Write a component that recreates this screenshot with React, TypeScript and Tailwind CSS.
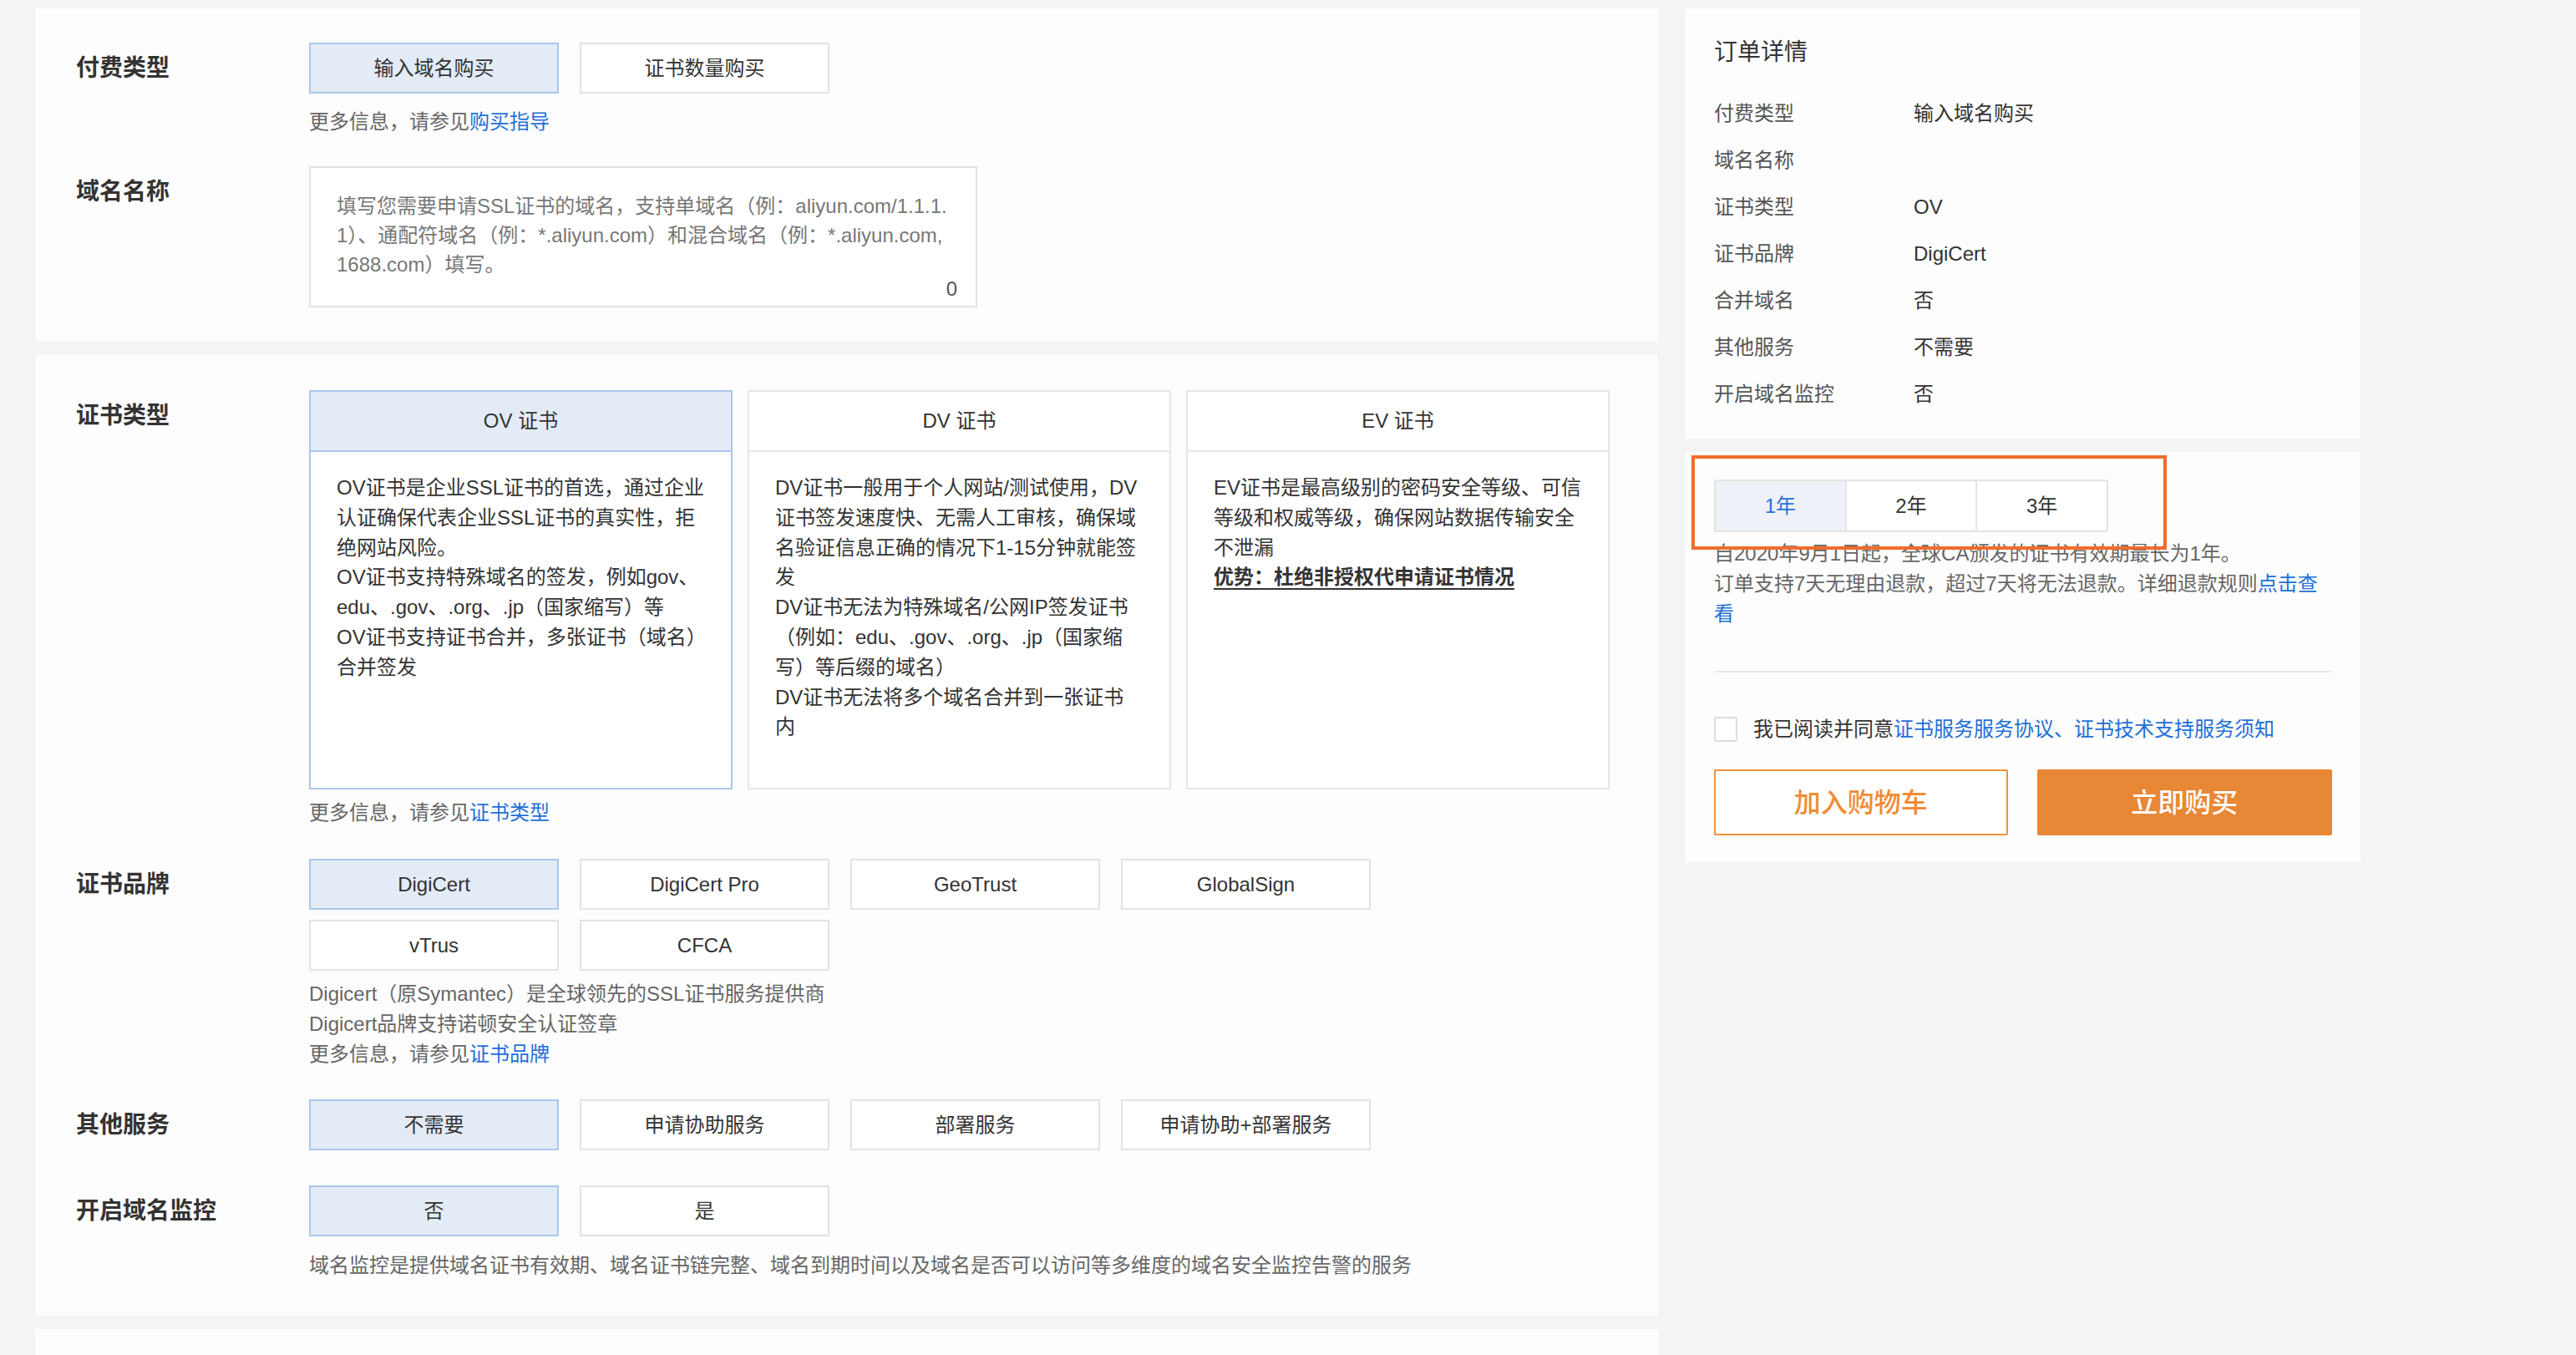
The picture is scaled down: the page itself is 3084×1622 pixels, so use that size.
import React from "react";

const FONT = "font-['Liberation_Sans','Noto_Sans_CJK_SC',sans-serif]";

function OptionButton({ label, active }: { label: string; active?: boolean }) {
  return (
    <div
      className={
        "flex h-[61px] w-[299px] items-center justify-center border-2 text-[24px] text-[#333] " +
        (active ? "border-[#a9c7ea] bg-[#e3ebf7]" : "border-[#e3e3e3] bg-white")
      }
    >
      {label}
    </div>
  );
}

function Row({ label, children, className = "" }: { label: string; children: React.ReactNode; className?: string }) {
  return (
    <div className={"flex " + className}>
      <div className="flex h-[61px] w-[279px] shrink-0 items-center text-[28px] font-semibold text-[#333]">{label}</div>
      <div className="flex flex-col">{children}</div>
    </div>
  );
}

function Helper({ link, className = "" }: { link: string; className?: string }) {
  return (
    <div className={"text-[24px] leading-[36px] text-[#666] " + className}>
      更多信息，请参见<span className="text-[#1f6fd8]">{link}</span>
    </div>
  );
}

const CERTS = [
  {
    title: "OV 证书",
    active: true,
    lines: [
      "OV证书是企业SSL证书的首选，通过企业",
      "认证确保代表企业SSL证书的真实性，拒",
      "绝网站风险。",
      "OV证书支持特殊域名的签发，例如gov、",
      "edu、.gov、.org、.jp（国家缩写）等",
      "OV证书支持证书合并，多张证书（域名）",
      "合并签发",
    ],
  },
  {
    title: "DV 证书",
    lines: [
      "DV证书一般用于个人网站/测试使用，DV",
      "证书签发速度快、无需人工审核，确保域",
      "名验证信息正确的情况下1-15分钟就能签",
      "发",
      "DV证书无法为特殊域名/公网IP签发证书",
      "（例如：edu、.gov、.org、.jp（国家缩",
      "写）等后缀的域名）",
      "DV证书无法将多个域名合并到一张证书",
      "内",
    ],
  },
  {
    title: "EV 证书",
    lines: ["EV证书是最高级别的密码安全等级、可信", "等级和权威等级，确保网站数据传输安全", "不泄漏"],
    strong: "优势：杜绝非授权代申请证书情况",
  },
];

const ORDER = [
  ["付费类型", "输入域名购买"],
  ["域名名称", ""],
  ["证书类型", "OV"],
  ["证书品牌", "DigiCert"],
  ["合并域名", "否"],
  ["其他服务", "不需要"],
  ["开启域名监控", "否"],
];

export default function App() {
  return (
    <div className={"h-[1622px] w-[3084px] overflow-hidden bg-[#f4f4f4] " + FONT}>
      <div className="flex gap-[33px] pl-[42px] pt-[10px]">
        {/* left column */}
        <div className="flex w-[1943px] flex-col gap-[16px]">
          <div className="bg-[#fdfdfd] px-[49px] pb-[41px] pt-[41px]">
            <Row label="付费类型">
              <div className="flex gap-[25px]">
                <OptionButton label="输入域名购买" active />
                <OptionButton label="证书数量购买" />
              </div>
              <Helper link="购买指导" className="mt-[16px]" />
            </Row>
            <Row label="域名名称" className="mt-[35px]">
              <div className="relative h-[169px] w-[800px] border-2 border-[#e3e3e3] bg-white pl-[31px] pt-[28px] text-[24px] leading-[35px] text-[#777]">
                <div className="whitespace-nowrap">填写您需要申请SSL证书的域名，支持单域名（例：aliyun.com/1.1.1.</div>
                <div className="whitespace-nowrap">1）、通配符域名（例：*.aliyun.com）和混合域名（例：*.aliyun.com,</div>
                <div className="whitespace-nowrap">1688.com）填写。</div>
                <span className="absolute bottom-[3px] right-[22px] text-[#555]">0</span>
              </div>
            </Row>
          </div>

          <div className="bg-[#fdfdfd] px-[49px] pb-[42px] pt-[42px]">
            <Row label="证书类型">
              <div className="flex gap-[18px]">
                {CERTS.map((c) => (
                  <div
                    key={c.title}
                    className={
                      "flex h-[478px] w-[507px] flex-col border-2 bg-white " +
                      (c.active ? "border-[#a9c7ea]" : "border-[#e6e6e6]")
                    }
                  >
                    <div
                      className={
                        "flex h-[72px] shrink-0 items-center justify-center border-b-2 text-[24px] text-[#333] " +
                        (c.active ? "border-[#a9c7ea] bg-[#e3ebf7]" : "border-[#e6e6e6]")
                      }
                    >
                      {c.title}
                    </div>
                    <div className="px-[31px] pt-[25px] text-[24px] leading-[35.8px] text-[#333]">
                      {c.lines.map((l, i) => (
                        <div key={i} className="whitespace-nowrap">
                          {l}
                        </div>
                      ))}
                      {c.strong && <div className="whitespace-nowrap font-bold underline underline-offset-[5px]">{c.strong}</div>}
                    </div>
                  </div>
                ))}
              </div>
              <Helper link="证书类型" className="mt-[10px]" />
            </Row>

            <Row label="证书品牌" className="mt-[37px]">
              <div className="flex gap-[25px]">
                <OptionButton label="DigiCert" active />
                <OptionButton label="DigiCert Pro" />
                <OptionButton label="GeoTrust" />
                <OptionButton label="GlobalSign" />
              </div>
              <div className="mt-[12px] flex gap-[25px]">
                <OptionButton label="vTrus" />
                <OptionButton label="CFCA" />
              </div>
              <div className="mt-[10px] text-[24px] leading-[36px] text-[#666]">
                <div>Digicert（原Symantec）是全球领先的SSL证书服务提供商</div>
                <div>Digicert品牌支持诺顿安全认证签章</div>
              </div>
              <Helper link="证书品牌" />
            </Row>

            <Row label="其他服务" className="mt-[36px]">
              <div className="flex gap-[25px]">
                <OptionButton label="不需要" active />
                <OptionButton label="申请协助服务" />
                <OptionButton label="部署服务" />
                <OptionButton label="申请协助+部署服务" />
              </div>
            </Row>

            <Row label="开启域名监控" className="mt-[42px]">
              <div className="flex gap-[25px]">
                <OptionButton label="否" active />
                <OptionButton label="是" />
              </div>
              <div className="mt-[17px] whitespace-nowrap text-[24px] leading-[36px] text-[#666]">
                域名监控是提供域名证书有效期、域名证书链完整、域名到期时间以及域名是否可以访问等多维度的域名安全监控告警的服务
              </div>
            </Row>
          </div>

          <div className="h-[200px] bg-[#fdfdfd]" />
        </div>

        {/* right column */}
        <div className="flex w-[808px] flex-col gap-[16px]">
          <div className="bg-[#fdfdfd] px-[34px] pb-[25px] pt-[36px]">
            <div className="text-[28px] leading-[34px] text-[#333]">订单详情</div>
            <div className="mt-[28px]">
              {ORDER.map(([k, v]) => (
                <div key={k} className="flex h-[56px] items-center text-[24px]">
                  <div className="w-[239px] text-[#555]">{k}</div>
                  <div className="text-[#333]">{v}</div>
                </div>
              ))}
            </div>
          </div>

          <div className="relative bg-[#fdfdfd] px-[34px] pb-[32px] pt-[33px]">
            <div className="flex h-[63px] w-[472px] rounded-[3px] border-2 border-[#e3e3e3] text-[24px]">
              <div className="flex flex-1 items-center justify-center bg-[#eef1f7] text-[#2a6fd6]">1年</div>
              <div className="flex flex-1 items-center justify-center border-l-2 border-[#e3e3e3] bg-white text-[#333]">2年</div>
              <div className="flex flex-1 items-center justify-center border-l-2 border-[#e3e3e3] bg-white text-[#333]">3年</div>
            </div>
            <div className="mt-[8px] text-[24px] leading-[36px] text-[#666]">
              <div className="whitespace-nowrap">自2020年9月1日起，全球CA颁发的证书有效期最长为1年。</div>
              <div className="whitespace-nowrap">
                订单支持7天无理由退款，超过7天将无法退款。详细退款规则<span className="text-[#1f6fd8]">点击查</span>
              </div>
              <div className="text-[#1f6fd8]">看</div>
            </div>
            <div className="mt-[50px] h-[2px] bg-[#e8e8e8]" />
            <div className="mt-[50px] flex h-[36px] items-center text-[24px]">
              <div className="h-[30px] w-[28px] rounded-[3px] border-2 border-[#dcdcdc] bg-white" />
              <div className="ml-[19px] text-[#333]">
                我已阅读并同意<span className="text-[#1f6fd8]">证书服务服务协议、证书技术支持服务须知</span>
              </div>
            </div>
            <div className="mt-[30px] flex gap-[35px]">
              <button className="flex h-[79px] w-[352px] items-center justify-center rounded-[2px] border-2 border-[#f0913a] bg-white text-[32px] font-medium text-[#f08c37]">
                加入购物车
              </button>
              <button className="flex h-[79px] w-[354px] items-center justify-center rounded-[2px] bg-[#e88735] text-[32px] font-medium text-white">
                立即购买
              </button>
            </div>
            <div className="absolute left-[7px] top-[4px] h-[113px] w-[569px] border-4 border-[#ef6c2b]" />
          </div>
        </div>
      </div>
    </div>
  );
}
